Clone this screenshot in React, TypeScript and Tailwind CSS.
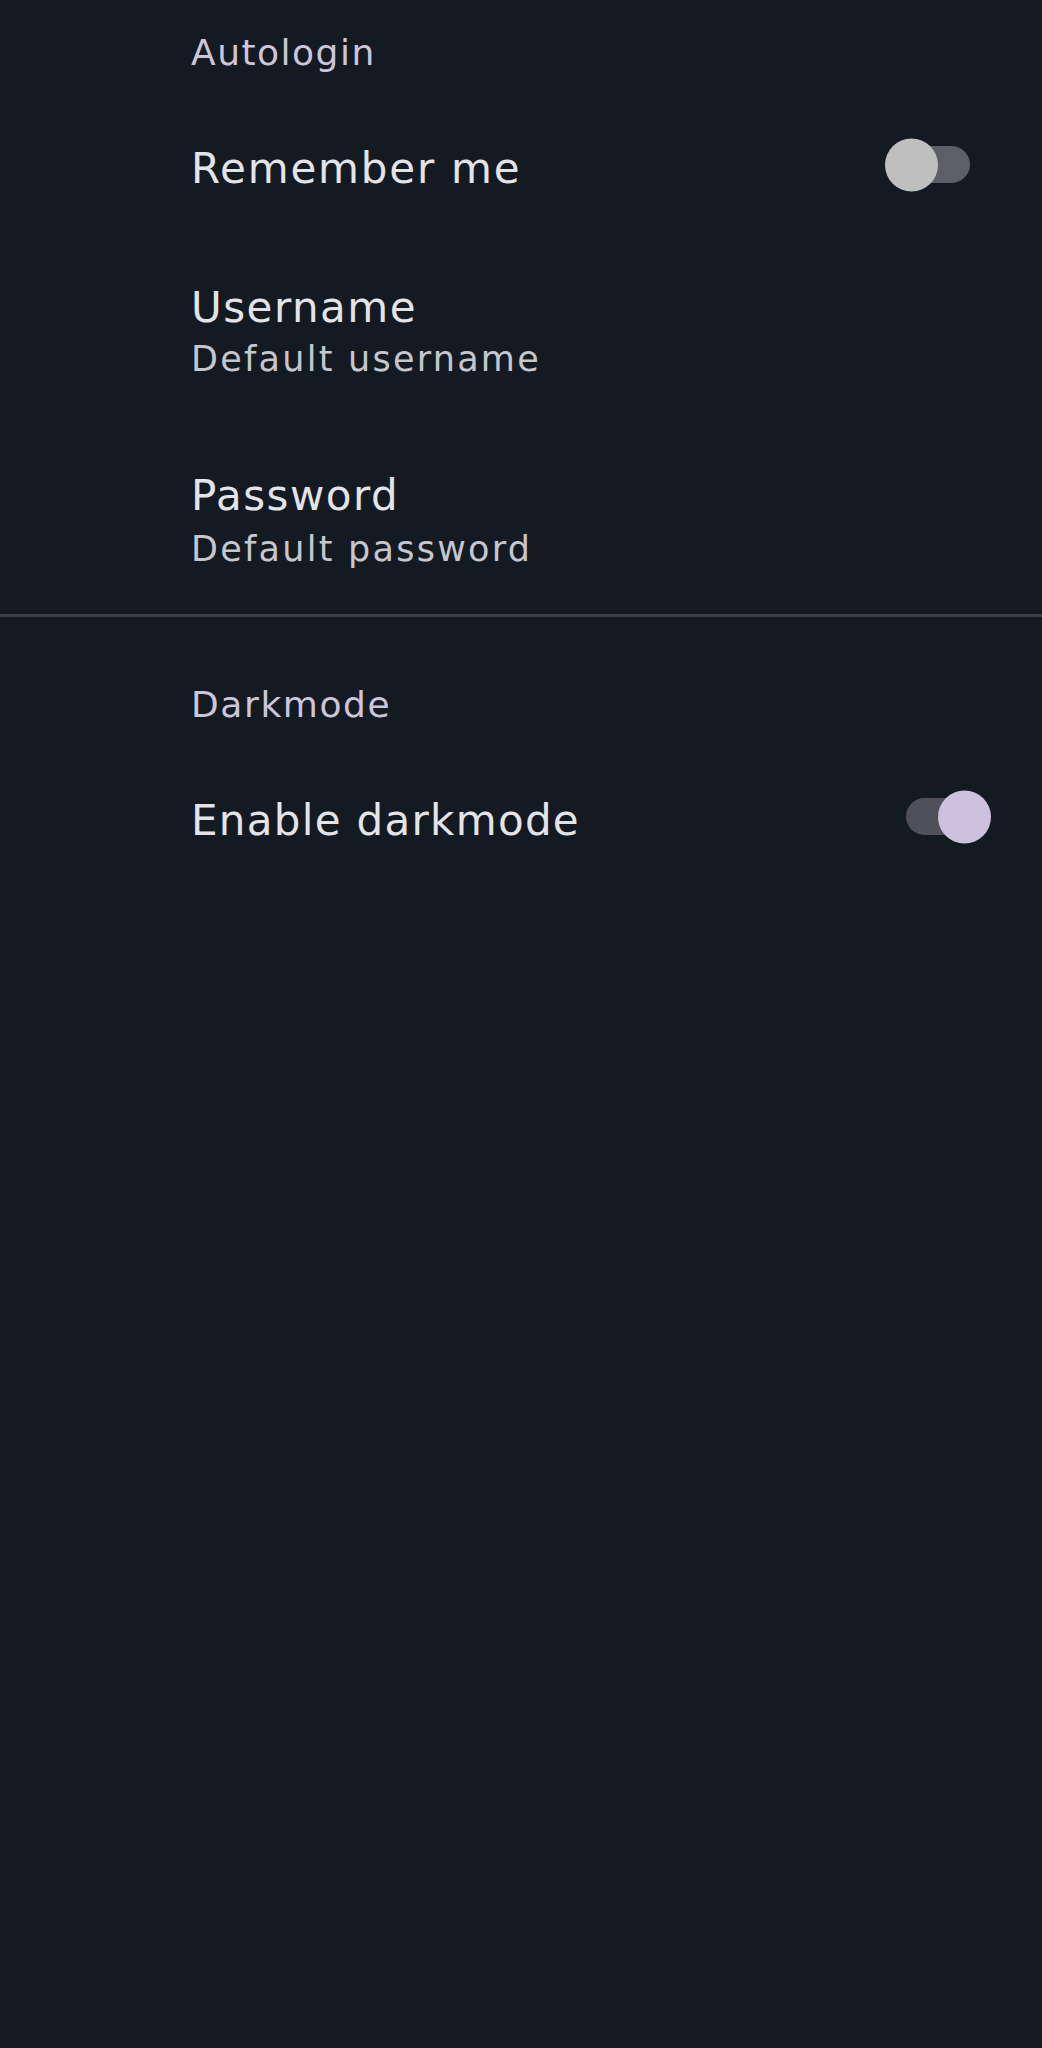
import React from "react";

const Toggle = ({ on }: { on: boolean }) => {
  return (
    <div
      className={
        "relative -mt-[2px] h-[37px] w-[64px] shrink-0 rounded-full " +
        (on ? "bg-[#4f505a]" : "bg-[#5c5f66]")
      }
    >
      <div
        className={
          "absolute top-1/2 h-[53px] w-[53px] -translate-y-1/2 rounded-full " +
          (on ? "right-[-21px] bg-[#cdc2dd]" : "left-[-21px] bg-[#bfbfc0]")
        }
      />
    </div>
  );
};

const App = () => {
  return (
    <div
      className="min-h-[2048px] w-full bg-[#141a22]"
      style={{ fontFamily: '"DejaVu Sans", sans-serif' }}
    >
      {/* Autologin */}
      <div className="pl-[191px] pr-[72px] pt-[35px]">
        <div className="text-[36px] leading-none tracking-[1.5px] text-[#cdc5d9]">Autologin</div>

        <div className="mt-[77px] flex h-[42px] items-start justify-between">
          <span className="text-[42px] leading-none tracking-[1.8px] text-[#e4e4e8]">Remember me</span>
          <Toggle on={false} />
        </div>

        <div className="mt-[97px] text-[42px] leading-none tracking-[1.5px] text-[#e4e4e8]">Username</div>
        <div className="mt-[13px] text-[35px] leading-none tracking-[2.25px] text-[#c6c6cd]">Default username</div>

        <div className="mt-[98px] text-[42px] leading-none tracking-[1.5px] text-[#e4e4e8]">Password</div>
        <div className="mt-[15px] text-[35px] leading-none tracking-[2.25px] text-[#c6c6cd]">Default password</div>
      </div>

      <div className="mt-[47px] h-[3px] w-full bg-[#3b3e45]" />

      {/* Darkmode */}
      <div className="pl-[191px] pr-[72px]">
        <div className="mt-[70px] text-[36px] leading-none tracking-[1.6px] text-[#cdc5d9]">Darkmode</div>

        <div className="mt-[77px] flex h-[42px] items-start justify-between">
          <span className="text-[42px] leading-none tracking-[1.3px] text-[#e4e4e8]">Enable darkmode</span>
          <Toggle on={true} />
        </div>
      </div>
    </div>
  );
};

export default App;
